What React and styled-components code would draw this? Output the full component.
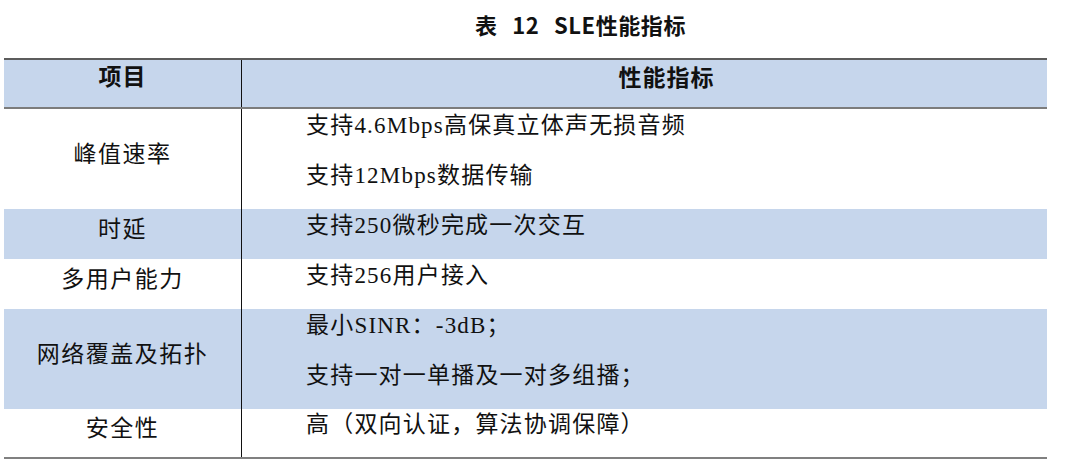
import React from "react";
import styled, { createGlobalStyle } from "styled-components";

const GlobalStyle = createGlobalStyle`
  html, body {
    margin: 0;
    padding: 0;
    background: #ffffff;
  }
  body {
    font-family: "Noto Sans CJK SC", "Noto Sans", sans-serif;
    color: #111111;
  }
`;

const rows = [
  {
    name: "峰值速率",
    lines: ["支持4.6Mbps高保真立体声无损音频", "支持12Mbps数据传输"],
  },
  { name: "时延", lines: ["支持250微秒完成一次交互"], shaded: true },
  { name: "多用户能力", lines: ["支持256用户接入"] },
  {
    name: "网络覆盖及拓扑",
    lines: ["最小SINR：-3dB；", "支持一对一单播及一对多组播；"],
    shaded: true,
  },
  { name: "安全性", lines: ["高（双向认证，算法协调保障）"], last: true },
];

const Page = styled.div`
  width: 1080px;
  height: 468px;
  padding: 11px 33px 0 4px;
  box-sizing: border-box;
`;

const Title = styled.h1`
  margin: 0 0 20px 0;
  padding-left: 110px;
  height: 27px;
  text-align: center;
  font-family: "Noto Sans CJK SC", sans-serif;
  font-weight: 700;
  font-size: 22px;
  line-height: 27px;
  letter-spacing: 0.6px;
  word-spacing: 9px;
  color: #111;
`;

const Table = styled.div`
  border-top: 2px solid #5c5c5c;
  border-bottom: 2px solid #808080;
`;

const Row = styled.div`
  display: grid;
  grid-template-columns: 238px 1fr;
  background: ${(p) => (p.$shaded ? "#c6d6ec" : "#ffffff")};
  border-bottom: ${(p) => (p.$head ? "2px solid #7c7c7c" : "none")};
`;

const NameCell = styled.div`
  display: flex;
  align-items: center;
  justify-content: center;
  padding-bottom: 14px;
  border-right: 1px solid #111;
  font-size: 23px;
  line-height: 24px;
  font-weight: 400;
  letter-spacing: 1.5px;
`;

const HeadName = styled(NameCell)`
  align-items: flex-start;
  padding: 3px 0 0 0;
  font-weight: 700;
  letter-spacing: 1px;
`;

const ValueCell = styled.div`
  display: flex;
  flex-direction: column;
  align-items: ${(p) => (p.$head ? "center" : "flex-start")};
  padding-left: ${(p) => (p.$head ? "44px" : "64px")};
  font-family: ${(p) =>
    p.$head
      ? '"Noto Sans CJK SC", sans-serif'
      : '"Liberation Serif", "Noto Sans CJK SC", serif'};
`;

const Line = styled.div`
  height: ${(p) => p.$h || 50}px;
  box-sizing: border-box;
  padding-bottom: 16px;
  display: flex;
  align-items: center;
  font-size: 23px;
  line-height: 24px;
  font-weight: ${(p) => (p.$head ? 700 : 400)};
  letter-spacing: ${(p) => (p.$head ? "1px" : "1.2px")};
  white-space: nowrap;
`;

export default function App() {
  return (
    <>
      <GlobalStyle />
      <Page>
        <Title>表 12 SLE性能指标</Title>
        <Table>
          <Row $shaded $head>
            <HeadName>项目</HeadName>
            <ValueCell $head>
              <Line $head $h={47}>
                性能指标
              </Line>
            </ValueCell>
          </Row>
          {rows.map((r) => (
            <Row key={r.name} $shaded={r.shaded}>
              <NameCell>{r.name}</NameCell>
              <ValueCell>
                {r.lines.map((l) => (
                  <Line key={l} $h={r.last ? 48 : 50}>
                    {l}
                  </Line>
                ))}
              </ValueCell>
            </Row>
          ))}
        </Table>
      </Page>
    </>
  );
}
